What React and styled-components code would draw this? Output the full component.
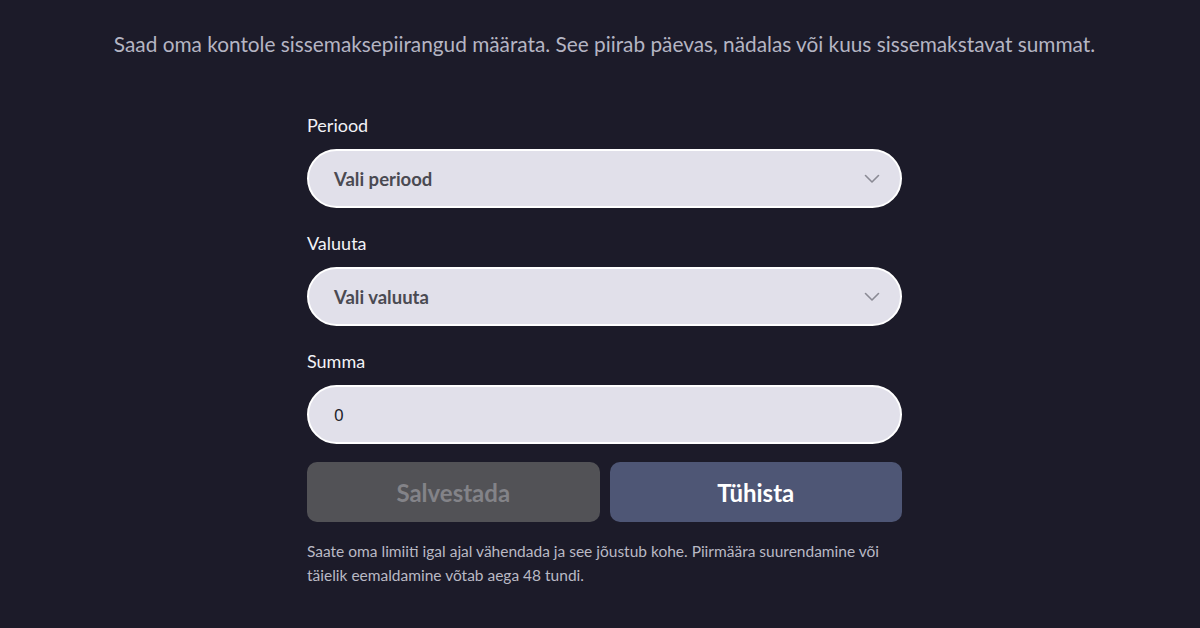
import React from "react";
import styled, { createGlobalStyle } from "styled-components";

const GlobalStyle = createGlobalStyle`
  html, body {
    margin: 0;
    padding: 0;
    background-color: #1c1b29;
  }
  body {
    font-family: "Lato", "Liberation Sans", sans-serif;
  }
`;

const Page = styled.div`
  width: 1200px;
  height: 628px;
  background-color: #1c1b29;
  display: flex;
  flex-direction: column;
  align-items: center;
  box-sizing: border-box;
  padding: 30px 0 0 9px;
`;

const Intro = styled.p`
  margin: 0;
  color: #b5b5c3;
  font-size: 20.8px;
  line-height: 28px;
  text-align: center;
`;

const Form = styled.form`
  width: 595px;
  margin-top: 56px;
  display: flex;
  flex-direction: column;
`;

const Label = styled.label`
  color: #f2f2f6;
  font-size: 18px;
  line-height: 22px;
  margin-bottom: 13px;
`;

const Field = styled.div`
  height: 59px;
  box-sizing: border-box;
  border: 2px solid #ffffff;
  border-radius: 30px;
  background-color: #e1e0ea;
  display: flex;
  align-items: center;
  justify-content: space-between;
  padding: 0 20px 0 25px;
  margin-bottom: ${(props) => props.gap || 24}px;
`;

const SelectText = styled.span`
  color: #4a4a52;
  font-size: 18.5px;
  font-weight: 700;
`;

const ValueText = styled.span`
  color: #222228;
  font-family: "Noto Sans", sans-serif;
  font-size: 17px;
`;

const Chevron = () => (
  <svg width="16" height="10" viewBox="0 0 16 10" fill="none">
    <path d="M1.5 1.5 L8 8 L14.5 1.5" stroke="#8a8a94" strokeWidth="1.6" strokeLinecap="round" strokeLinejoin="round" />
  </svg>
);

const Buttons = styled.div`
  display: grid;
  grid-template-columns: 1fr 1fr;
  gap: 10px;
`;

const Button = styled.button`
  height: 60px;
  border: none;
  border-radius: 10px;
  font-family: inherit;
  font-size: 24px;
  font-weight: 700;
  background-color: ${(props) => (props.disabled ? "#525256" : "#4e5675")};
  color: ${(props) => (props.disabled ? "#838388" : "#ffffff")};
`;

const Note = styled.p`
  margin: 17px 0 0;
  color: #b9b9c4;
  font-size: 15.5px;
  line-height: 24px;
`;

export default function App() {
  return (
    <>
      <GlobalStyle />
      <Page>
        <Intro>
          Saad oma kontole sissemaksepiirangud määrata. See piirab päevas, nädalas või kuus sissemakstavat summat.
        </Intro>
        <Form>
          <Label>Periood</Label>
          <Field>
            <SelectText>Vali periood</SelectText>
            <Chevron />
          </Field>
          <Label>Valuuta</Label>
          <Field>
            <SelectText>Vali valuuta</SelectText>
            <Chevron />
          </Field>
          <Label>Summa</Label>
          <Field gap={18}>
            <ValueText>0</ValueText>
          </Field>
          <Buttons>
            <Button type="button" disabled>Salvestada</Button>
            <Button type="button">Tühista</Button>
          </Buttons>
          <Note>
            Saate oma limiiti igal ajal vähendada ja see jõustub kohe. Piirmäära suurendamine või
            <br />
            täielik eemaldamine võtab aega 48 tundi.
          </Note>
        </Form>
      </Page>
    </>
  );
}
